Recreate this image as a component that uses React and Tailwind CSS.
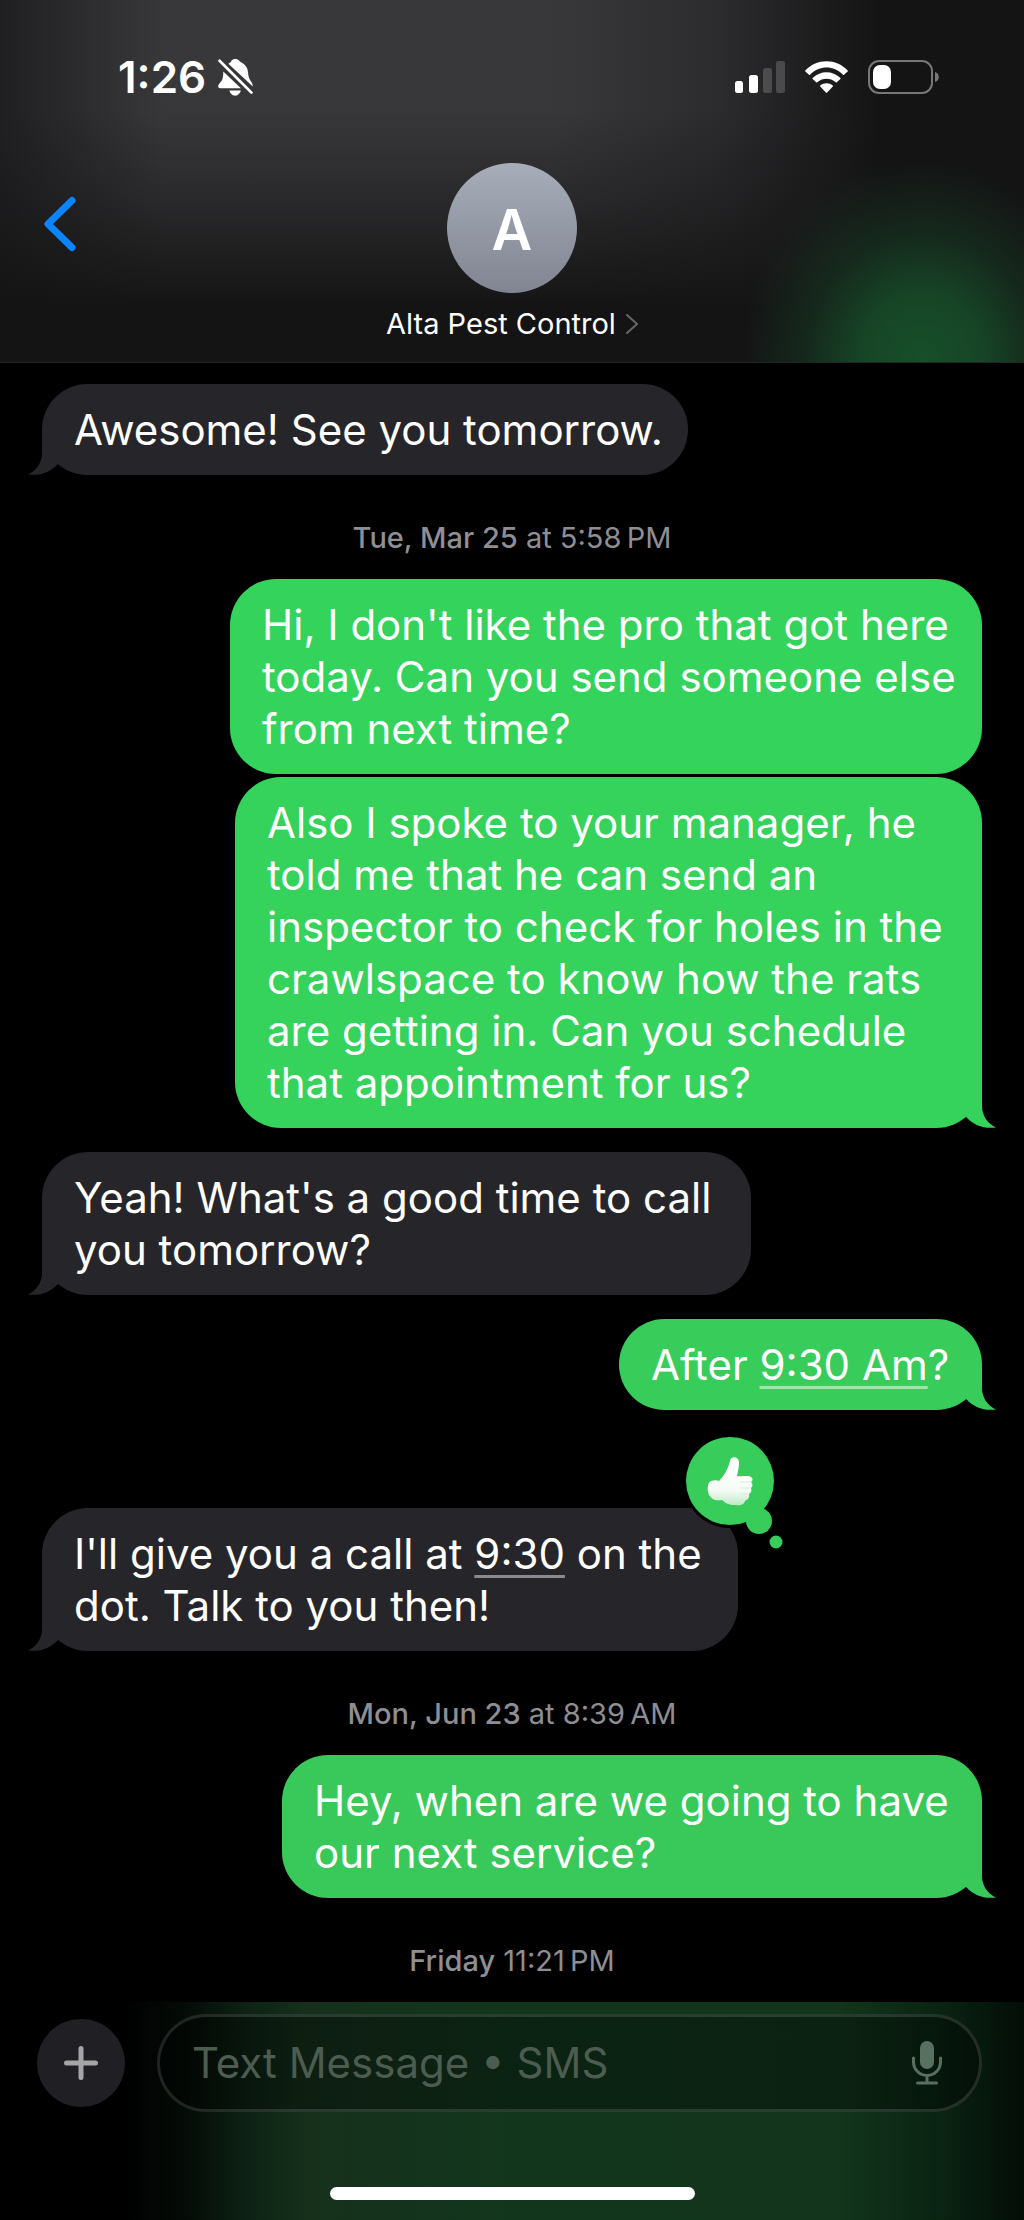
import { useState } from 'react'

const messages = [
  { id: 1, type: 'received', tail: true, width: 'w-[646px]', spacing: '', lines: ['Awesome! See you tomorrow.'] },
  { id: 2, type: 'time', day: 'Tue, Mar 25', time: 'at 5:58\u202fPM' },
  {
    id: 3,
    type: 'sent',
    color: 'bg-[#34d35c]',
    width: 'w-[752px]',
    spacing: '',
    lines: ["Hi, I don't like the pro that got here", 'today. Can you send someone else', 'from next time?'],
  },
  {
    id: 4,
    type: 'sent',
    tail: true,
    color: 'bg-[#35d25c] text-[#35d25c]',
    width: 'w-[747px]',
    spacing: 'mt-[3px]',
    lines: [
      'Also I spoke to your manager, he',
      'told me that he can send an',
      'inspector to check for holes in the',
      'crawlspace to know how the rats',
      'are getting in. Can you schedule',
      'that appointment for us?',
    ],
  },
  {
    id: 5,
    type: 'received',
    tail: true,
    width: 'w-[709px]',
    spacing: 'mt-6',
    lines: ["Yeah! What's a good time to call", 'you tomorrow?'],
  },
  {
    id: 6,
    type: 'sent',
    tail: true,
    color: 'bg-[#38cc5a] text-[#38cc5a]',
    width: 'w-[363px]',
    spacing: 'mt-6',
    lines: [['After ', { time: '9:30 Am' }, '?']],
  },
  {
    id: 7,
    type: 'received',
    tail: true,
    reaction: true,
    width: 'w-[696px]',
    spacing: 'mt-[98px]',
    lines: [["I'll give you a call at ", { time: '9:30' }, ' on the'], 'dot. Talk to you then!'],
  },
  { id: 8, type: 'time', day: 'Mon, Jun 23', time: 'at 8:39\u202fAM' },
  {
    id: 9,
    type: 'sent',
    tail: true,
    color: 'bg-[#38c95a] text-[#38c95a]',
    width: 'w-[700px]',
    spacing: '',
    lines: ['Hey, when are we going to have', 'our next service?'],
  },
  { id: 10, type: 'time', day: 'Friday', time: '11:21\u202fPM' },
]

const StatusBar = () => (
  <div className="flex h-[54px] items-center justify-between pl-[118px] pr-[84px]">
    <div className="flex items-center gap-3">
      <span className="text-[44px] leading-[54px] font-semibold">1:26</span>
      <svg viewBox="0 0 102 112" className="h-[38px] w-[35px]" fill="currentColor" aria-label="Silent mode">
        <path d="M30 17c5-4 9-6 9-9 4-7 19-7 23 0 1 5 24 8 26 34 1 26 14 26 14 42Z" />
        <path d="M15 40 67 89H6c-6 0-8-6-4-12 8-9 13-11 13-37Z" />
        <path d="M33 96h34c-3 8-8 15-17 15s-15-7-17-15Z" />
        <path d="m4 8 94 94" stroke="#38383a" strokeWidth="17" />
        <path d="m4 8 94 94" stroke="currentColor" strokeWidth="8" strokeLinecap="round" />
      </svg>
    </div>
    <div className="flex items-center">
      <svg viewBox="0 0 50 32" className="h-8 w-[50px]" fill="currentColor" aria-label="Signal">
        <rect x="0" y="20" width="8" height="12" rx="2.5" />
        <rect x="14" y="14" width="9" height="18" rx="2.5" />
        <rect x="28" y="7" width="9" height="25" rx="2.5" opacity=".18" />
        <rect x="41" y="0" width="9" height="32" rx="2.5" opacity=".18" />
      </svg>
      <svg viewBox="0 0 130 96" className="ml-5 h-8 w-[43px]" fill="currentColor" aria-label="Wi-Fi">
        <path d="M1 28C36-9 94-9 129 28c1 1 1 2 0 3l-11 10c-1 1-2 1-3 0-29-29-71-29-100 0-1 1-2 1-3 0L1 31c-1-1-1-2 0-3Z" />
        <path d="M23 51c24-23 60-23 84 0 1 1 1 2 0 3L96 64c-1 1-2 1-3 0-17-14-39-14-56 0-1 1-2 1-3 0L23 54c-1-1-1-2 0-3Z" />
        <path d="M46 74c11-9 27-9 38 0 1 1 1 2 0 3L67 95c-1 1-3 1-4 0L46 77c-1-1-1-2 0-3Z" />
      </svg>
      <svg viewBox="0 0 72 34" className="ml-5 h-[34px] w-[72px]" aria-label="Battery">
        <rect x="1" y="1" width="63" height="32" rx="10" fill="none" stroke="#777" strokeWidth="2" />
        <rect x="5" y="5" width="18" height="24" rx="7" fill="#fff" />
        <path d="M67 12c5 1 5 9 0 10Z" fill="#777" />
      </svg>
    </div>
  </div>
)

const Header = () => (
  <header className="border-b border-[#242426] bg-[#141415] bg-[radial-gradient(ellipse_180px_200px_at_90%_100%,#17502a_0%,#17502acc_35%,#17502a55_65%,transparent_100%),linear-gradient(180deg,transparent_30%,#14141566_55%,#141415_85%),linear-gradient(90deg,#202022_0%,#38383a_16%,#38383a_54%,#2c2c2e_70%,#141415_86%)] pt-[50px]">
    <StatusBar />
    <div className="grid grid-cols-[1fr_auto_1fr] px-[43px] pt-[59px] pb-5">
      <button type="button" aria-label="Back" className="flex h-[122px] items-center self-start text-[#0a84ff]">
        <svg viewBox="0 0 34 56" className="h-14 w-[34px]" fill="none" stroke="currentColor" strokeWidth="7">
          <path d="M29 4.500 5 28l24 23.500" strokeLinecap="round" strokeLinejoin="round" />
        </svg>
      </button>
      <button type="button" className="flex flex-col items-center gap-[13px]">
        <span className="flex size-[130px] items-center justify-center rounded-full bg-linear-to-b from-[#a8adba] to-[#818592] pt-1 text-[56px] font-semibold">
          A
        </span>
        <span className="flex items-center gap-[10px] text-[29px] leading-9">
          Alta Pest Control
          <svg viewBox="0 0 12 20" className="h-5 w-3" fill="none" stroke="#66666a" strokeWidth="2">
            <path d="m1 1 10 9-10 9" strokeLinecap="round" />
          </svg>
        </span>
      </button>
    </div>
  </header>
)

const TimeStamp = ({ day, time }) => (
  <div className="flex h-[104px] items-center justify-center pt-[22px] text-[29px] text-[#8e8e93]">
    <p>
      <span className="font-medium">{day}</span> {time}
    </p>
  </div>
)

const Reaction = () => (
  <svg viewBox="0 0 100 118" className="absolute -top-[73px] -right-[46px] h-[118px] w-[100px]" aria-label="Liked">
    <defs>
      <linearGradient id="thumb" x1="0" y1="0" x2="0" y2="1">
        <stop offset="0.3" stopColor="#fff" />
        <stop offset="0.7" stopColor="#f3fbf3" />
        <stop offset="1" stopColor="#bfe9c5" />
      </linearGradient>
    </defs>
    <circle cx="46" cy="46" r="47" fill="#000" />
    <circle cx="46" cy="46" r="44" fill="#38cc5a" />
    <circle cx="75" cy="86" r="13" fill="#38cc5a" />
    <circle cx="92" cy="107" r="6.500" fill="#38cc5a" />
    {/* thumb, hand and cuff */}
    <path
      d="M27 46c3-1 6-1 8 0 5-5 9-12 11-20 1-5 8-5 9 1 0 6-1 9-2 14 5 1 11-1 14 1 2 1 2 4 0 5 2 2 2 4 0 6 1 3 0 5-2 6 1 4-2 6-4 7-1 4-5 5-10 4-6 0-10-2-13-5-5 1-10 0-13-5-2-5-2-12 2-14Z"
      fill="url(#thumb)"
    />
    <path d="M56 47h10M57 53h9M57 59h7" stroke="#d4efd6" strokeLinecap="round" />
  </svg>
)

// Fills the bubble's rounded corner along its side and flares out to the tip
const Tail = ({ sent }) => (
  <svg
    viewBox="0 0 36 46"
    className={`absolute bottom-0 h-[46px] w-9 ${sent ? '-right-[14px]' : '-left-[14px] -scale-x-100'}`}
    fill="currentColor"
    aria-hidden="true"
  >
    <path d="M0 0h22v24c0 10 6 18 14 21.500-12 1.500-22-2-30-10.500L0 30Z" />
  </svg>
)

const Bubble = ({ message }) => {
  const sent = message.type === 'sent'
  const colorClass = sent ? message.color : 'bg-[#26262a] text-[#26262a]'

  return (
    <div className={`flex ${sent ? 'justify-end' : 'justify-start'} ${message.spacing}`}>
      <div className={`relative max-w-full rounded-[46px] pt-5 pb-[19px] pl-8 ${message.width} ${colorClass}`}>
        {message.tail && <Tail sent={sent} />}
        <p className="relative text-[42px] leading-[52px] text-white">
          {message.lines.map((line, i) => (
            <span key={i} className="block whitespace-nowrap">
              {[line].flat().map((part, j) =>
                part.time ? (
                  <a
                    key={j}
                    href="#time"
                    className={`underline decoration-[3px] underline-offset-[6px] [text-decoration-skip-ink:none] ${sent ? 'decoration-white/50' : 'decoration-[#8a8a8e]'}`}
                  >
                    {part.time}
                  </a>
                ) : (
                  part
                )
              )}
            </span>
          ))}
        </p>
        {message.reaction && <Reaction />}
      </div>
    </div>
  )
}

const Composer = () => {
  const [text, setText] = useState('')

  return (
    <footer className="bg-[linear-gradient(90deg,#000_12%,#040b06_18%,#0d2214_24%,#16301c_30%,#12361c_50%,#12351c_82%,#0a2312_92%,#030d06_100%)]">
      <form className="flex items-center gap-8 pt-3 pr-[42px] pl-[37px]" onSubmit={(e) => e.preventDefault()}>
        <button
          type="button"
          aria-label="Add attachment"
          className="flex size-[88px] shrink-0 items-center justify-center rounded-full bg-[#202024]"
        >
          <svg viewBox="0 0 34 34" className="size-[34px]" stroke="#a5a5a8" strokeWidth="5" strokeLinecap="round">
            <path d="M17 2.500v29M2.500 17h29" />
          </svg>
        </button>
        <div className="flex h-[98px] min-w-0 flex-1 items-center rounded-full border-[3px] border-white/12 bg-black/35 pr-[37px] pl-8">
          <input
            type="text"
            value={text}
            onChange={(e) => setText(e.target.value)}
            aria-label="Text Message"
            placeholder="Text Message • SMS"
            className="min-w-0 flex-1 bg-transparent text-[42px] leading-[52px] text-white outline-none placeholder:text-[#4c5c50]"
          />
          <button type="button" aria-label="Dictate" className="shrink-0 text-[#587060]">
            <svg viewBox="0 0 30 44" className="h-11 w-[30px]" fill="none" stroke="currentColor" strokeWidth="3">
              <rect x="8" y="0" width="14" height="28" rx="7" fill="currentColor" stroke="none" />
              <path d="M1.500 17v4a13.500 13.500 0 0 0 27 0v-4M15 35v7M5.500 42h19" strokeLinecap="round" />
            </svg>
          </button>
        </div>
      </form>
      <div className="flex justify-center pt-[75px] pb-[21px]">
        <div className="h-[13px] w-[365px] rounded-full bg-white" />
      </div>
    </footer>
  )
}

export default function App() {
  return (
    <div className="flex min-h-screen flex-col bg-black font-['Inter',sans-serif] text-white">
      <Header />
      <main className="flex-1 px-[42px] pt-[21px]">
        {messages.map((message) =>
          message.type === 'time' ? (
            <TimeStamp key={message.id} day={message.day} time={message.time} />
          ) : (
            <Bubble key={message.id} message={message} />
          )
        )}
      </main>
      <Composer />
    </div>
  )
}
